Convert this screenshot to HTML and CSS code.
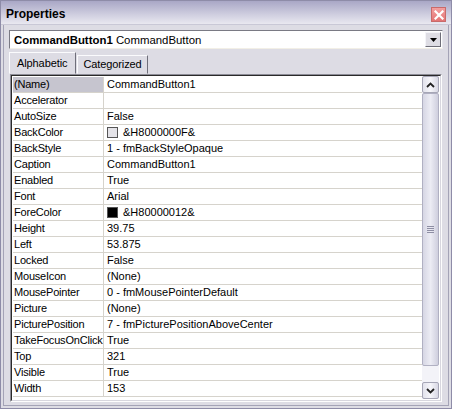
FILE: index.html
```html
<!DOCTYPE html>
<html>
<head>
<meta charset="utf-8">
<link rel="stylesheet" href="styles.css">
</head>
<body>
<div class="window">
  <div class="titlebar">
    <span class="title">Properties</span>
    <span class="close"><svg width="10" height="10" viewBox="0 0 10 10"><path d="M1.5 1.5 L8.5 8.5 M8.5 1.5 L1.5 8.5" stroke="#fff" stroke-width="2.2" stroke-linecap="square"/></svg></span>
  </div>
  <div class="body">
    <div class="combo">
      <span class="combo-text"><b>CommandButton1</b> CommandButton</span>
      <span class="drop"><svg width="7" height="4" viewBox="0 0 7 4"><path d="M0 0 H7 L3.5 4 Z" fill="#000"/></svg></span>
    </div>
    <div class="tabs">
      <div class="tab active">Alphabetic</div>
      <div class="tab">Categorized</div>
    </div>
    <div class="panel">
      <div class="inner">
        <div class="grid">
          <div class="name sel">(Name)</div><div class="val">CommandButton1</div>
          <div class="name">Accelerator</div><div class="val"></div>
          <div class="name">AutoSize</div><div class="val">False</div>
          <div class="name">BackColor</div><div class="val"><span class="swatch light"></span>&amp;H8000000F&amp;</div>
          <div class="name">BackStyle</div><div class="val">1 - fmBackStyleOpaque</div>
          <div class="name">Caption</div><div class="val">CommandButton1</div>
          <div class="name">Enabled</div><div class="val">True</div>
          <div class="name">Font</div><div class="val">Arial</div>
          <div class="name">ForeColor</div><div class="val"><span class="swatch dark"></span>&amp;H80000012&amp;</div>
          <div class="name">Height</div><div class="val">39.75</div>
          <div class="name">Left</div><div class="val">53.875</div>
          <div class="name">Locked</div><div class="val">False</div>
          <div class="name">MouseIcon</div><div class="val">(None)</div>
          <div class="name">MousePointer</div><div class="val">0 - fmMousePointerDefault</div>
          <div class="name">Picture</div><div class="val">(None)</div>
          <div class="name">PicturePosition</div><div class="val">7 - fmPicturePositionAboveCenter</div>
          <div class="name">TakeFocusOnClick</div><div class="val">True</div>
          <div class="name">Top</div><div class="val">321</div>
          <div class="name">Visible</div><div class="val">True</div>
          <div class="name">Width</div><div class="val">153</div>
        </div>
        <div class="scrollbar">
          <div class="sbtn"><svg width="9" height="6" viewBox="0 0 9 6"><path d="M1 5 L4.5 1.5 L8 5" fill="none" stroke="#222" stroke-width="1.8"/></svg></div>
          <div class="thumb"><span class="grip"></span></div>
          <div class="track"></div>
          <div class="sbtn"><svg width="9" height="6" viewBox="0 0 9 6"><path d="M1 1 L4.5 4.5 L8 1" fill="none" stroke="#222" stroke-width="1.8"/></svg></div>
        </div>
      </div>
    </div>
  </div>
</div>
</body>
</html>
```

FILE: styles.css
```css
* { box-sizing: border-box; }
html, body { margin: 0; padding: 0; background: #fff; }
body { font-family: "Liberation Sans", Arial, sans-serif; font-size: 11px; color: #000; }

.window {
  width: 452px;
  height: 409px;
  border: 1px solid #8e8ca8;
  background: #dddce4;
  display: flex;
  flex-direction: column;
}

.titlebar {
  height: 24px;
  flex: none;
  display: flex;
  align-items: center;
  justify-content: space-between;
  padding: 0 5px 0 5px;
  background: linear-gradient(#a9a7c6, #d0cfe0 60%, #e9e8f0);
  border-bottom: 1px solid #c9c8d6;
}
.title { font-weight: bold; font-size: 12px; padding-top: 2px; }
.close {
  width: 15px;
  height: 15px;
  margin-top: 4px;
  background: linear-gradient(#f3a0a0, #e37474);
  border: 1px solid #c86a6a;
  display: flex;
  align-items: center;
  justify-content: center;
}

.body {
  flex: 1;
  margin: 0 2px 2px 2px;
  border: 1px solid #a4a3b6;
  border-top: none;
  padding: 5px 5px 3px 5px;
  display: flex;
  flex-direction: column;
}

.combo {
  height: 19px;
  flex: none;
  background: #fff;
  border: 1px solid #7a7a84;
  border-right-color: #e8e8ee;
  border-bottom-color: #f2efe6;
  display: flex;
  align-items: center;
  justify-content: space-between;
  padding: 0 1px 0 4px;
  font-size: 11.4px;
}
.combo-text b { font-weight: bold; }
.drop {
  width: 16px;
  height: 15px;
  background: #dedde4;
  border: 1px solid;
  border-color: #f4f4f8 #6e6e78 #6e6e78 #f4f4f8;
  display: flex;
  align-items: center;
  justify-content: center;
}

.tabs {
  display: flex;
  align-items: flex-end;
  height: 25px;
  padding-left: 0;
  flex: none;
}
.tab {
  height: 19px;
  padding: 2px 5px 0 5px;
  border: 1px solid;
  border-color: #fbfbfd #6f6f7a transparent #fbfbfd;
  font-size: 11px;
  letter-spacing: -0.1px;
  margin-left: 1px;
}
.tab.active {
  height: 22px;
  padding-top: 4px;
  margin-left: 0;
  padding-left: 7px;
  padding-right: 8px;
}

.panel {
  flex: 1;
  margin-left: 1px;
  margin-right: 1px;
  border: 1px solid;
  border-color: #8c8c96 #fdfdfd #fdfdfd #8c8c96;
  display: flex;
}
.inner {
  flex: 1;
  border: 1px solid;
  border-color: #2a2a2a #d7d6de #d7d6de #2a2a2a;
  background: #fff;
  display: flex;
  padding: 1px 0 0 1px;
}

.grid {
  flex: 1;
  display: grid;
  grid-template-columns: 91px 1fr;
  grid-auto-rows: 16px;
  align-content: start;
}
.name, .val {
  border-bottom: 1px solid #d6d3cc;
  padding-left: 2px;
  line-height: 15px;
  white-space: nowrap;
  overflow: hidden;
  font-size: 11px;
}
.name { border-right: 1px solid #d6d3cc; padding-left: 1px; letter-spacing: -0.2px; }
.name.sel { background: #c6c5cf; }
.val { padding-left: 3px; display: flex; align-items: center; }
.swatch {
  width: 11px;
  height: 11px;
  border: 1px solid #555;
  margin-right: 5px;
  flex: none;
}
.swatch.light { background: #e4e3e8; }
.swatch.dark { background: #000; }

.scrollbar {
  width: 17px;
  display: flex;
  flex-direction: column;
  background: #f3f3f8;
  margin: -1px 1px 1px 0;
}
.sbtn {
  height: 17px;
  flex: none;
  border: 1px solid #a6a6b6;
  border-radius: 2px;
  background: linear-gradient(90deg, #e2e2ec, #f6f6fa 50%, #d8d8e4);
  display: flex;
  align-items: center;
  justify-content: center;
}
.thumb {
  height: 273px;
  flex: none;
  border: 1px solid #b0b0c2;
  border-radius: 2px;
  background: linear-gradient(90deg, #d6d6e4, #ececf4 50%, #cfcfde);
  display: flex;
  align-items: center;
  justify-content: center;
}
.grip {
  width: 7px;
  height: 7px;
  background: repeating-linear-gradient(#8e8ea4 0 1px, transparent 1px 2px);
}
.track { flex: 1; background: #f3f3f8; }
```
